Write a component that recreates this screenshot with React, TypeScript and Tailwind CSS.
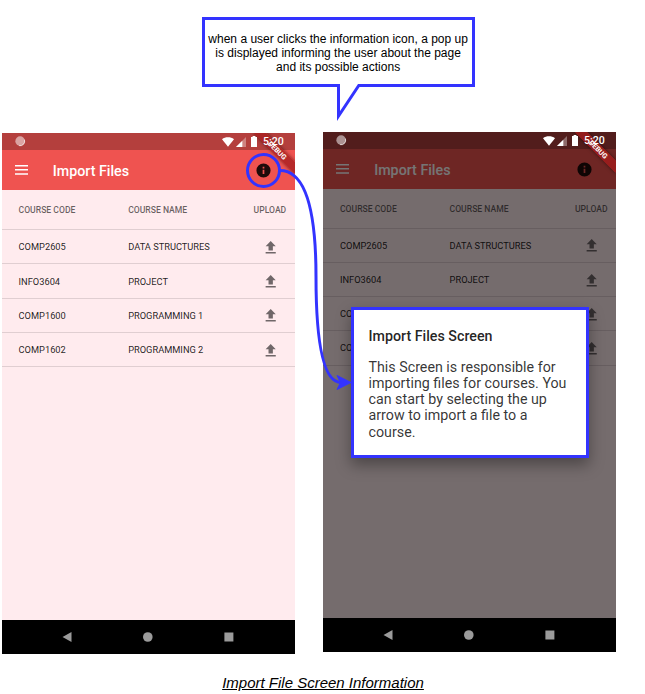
import React from 'react';

const courses = [
  { code: 'COMP2605', name: 'DATA STRUCTURES' },
  { code: 'INFO3604', name: 'PROJECT' },
  { code: 'COMP1600', name: 'PROGRAMMING 1' },
  { code: 'COMP1602', name: 'PROGRAMMING 2' },
];

function UploadIcon() {
  return (
    <svg viewBox="0 0 24 24" className="mt-[0.5px] h-[17.4px] w-[17.4px]" fill="#000" fillOpacity="0.56">
      <path d="M9 16h6v-6h4l-7-7.4L5 10h4zM5 18h14v2H5z" />
    </svg>
  );
}

function StatusBar() {
  return (
    <div className="flex h-[17px] shrink-0 items-center bg-[#b43f3d] pl-[13px] pr-[10.8px]">
      <svg viewBox="0 0 12 12" className="relative z-30 h-[11px] w-[11px]">
        <circle cx="5.6" cy="5.6" r="5.2" fill="#fff" fillOpacity="0.52" />
        <path d="M10.3 4A5 5 0 0 1 4.4 10.5" fill="none" stroke="#fff" strokeOpacity="0.7" strokeWidth="1" />
      </svg>
      <div className="relative z-30 ml-auto flex items-center text-white">
        <svg viewBox="0 0 12 10" className="h-[10px] w-[12px]" fill="#fff">
          <path d="M0 2.3C3.3-.3 8.7-.3 12 2.3L6 9.7z" />
        </svg>
        <svg viewBox="0 0 10 10" className="ml-[2px] h-[10px] w-[10px]" fill="#fff">
          <path d="M10 0v10H0z" fillOpacity="0.35" />
          <path d="M6.3 3.7V10H0z" />
        </svg>
        <svg viewBox="0 0 6 11" className="ml-[5.5px] h-[11px] w-[6px]" fill="#fff">
          <path d="M1.6 0h2.8v1.1H6V11H0V1.1h1.6z" />
        </svg>
        <span className="ml-[5.5px] mt-px text-[10.6px] font-medium leading-[16px]">5:20</span>
      </div>
    </div>
  );
}

function Phone({ dimmed = false }: { dimmed?: boolean }) {
  return (
    <div
      className={
        'relative flex flex-col overflow-hidden bg-[#ffebee] ' +
        (dimmed ? 'h-[520px] w-[292.6px]' : 'mt-px h-[521px] w-[293px]')
      }
    >
      <StatusBar />
      <div
        className={
          'flex h-[40px] shrink-0 items-center bg-[#ef5350] pl-[13.2px] ' +
          (dimmed ? 'pr-[22.8px]' : 'pr-[22.8px]')
        }
      >
        <svg viewBox="0 0 13 10" className="h-[10px] w-[13px]" fill="#fff">
          <path d="M0 .1h13v1.5H0zM0 4.1h13v1.5H0zM0 8.2h13v1.5H0z" />
        </svg>
        <h1 className="ml-[25px] mt-[2px] text-[14.26px] font-medium leading-[20px] text-white">Import Files</h1>
        <svg viewBox="0 0 24 24" className="ml-auto h-[17px] w-[17px]" fill="#000" fillOpacity="0.87">
          <path d="M12 2a10 10 0 1 0 0 20 10 10 0 0 0 0-20zm1.2 15h-2.4v-6h2.4zm0-7.8h-2.4V6.8h2.4z" />
        </svg>
      </div>
      <div className="flex h-[40px] shrink-0 items-center border-b border-black/12 pl-[17px] pt-px text-[8.6px] font-medium text-black/60">
        <span className="w-[109.6px]">COURSE CODE</span>
        <span className="w-[125.4px]">COURSE NAME</span>
        <span>UPLOAD</span>
      </div>
      {courses.map((c) => (
        <div
          key={c.code}
          className={
            'flex shrink-0 items-center border-b border-black/12 pl-[17px] text-[9.27px] text-black/87 ' +
            (dimmed ? 'h-[34.15px] pt-[0.6px]' : 'h-[34.25px] pt-[1.2px]')
          }
        >
          <span className="w-[109.6px]">{c.code}</span>
          <span className={dimmed ? 'w-[133.4px]' : 'w-[134.1px]'}>{c.name}</span>
          <UploadIcon />
        </div>
      ))}
      <div className="mt-auto h-[34px] shrink-0 bg-black">
        <svg viewBox="0 0 293 34" className="relative z-30 h-[34px] w-[293px]" fill="#9b9b9b">
          <path d="M60.5 17l9-5v10z" />
          <circle cx="145.8" cy="17" r="4.8" />
          <path d="M222.4 12.5h9v9h-9z" />
        </svg>
      </div>
      {dimmed && <div className="absolute inset-0 z-10 bg-black/54" />}
      <div
        className={
          'absolute right-[-11.4px] top-[13.3px] z-20 flex h-[8.55px] w-[57px] rotate-45 items-center justify-center text-[7.1px] font-bold leading-none text-white shadow-[0_0_4px_rgba(0,0,0,0.5)] ' +
          (dimmed ? 'bg-[#a31c1c]/80' : 'bg-[#a81f1f]/80')
        }
      >
        DEBUG
      </div>
    </div>
  );
}

export default function App() {
  return (
    <main className="relative flex h-[694px] w-[645px] flex-col overflow-hidden bg-white font-['Roboto',sans-serif]">
      <div className="ml-[202px] mt-[17px] h-[70px] w-[273px] border-[3px] border-[#3333ff] pr-[0.8px] pt-[12px] text-center font-['Liberation_Sans',sans-serif] text-[12px] leading-[14px] text-black">
        when a user clicks the information icon, a pop up
        <br />
        is displayed informing the user about the page
        <br />
        and its possible actions
      </div>
      <div className="mt-[45px] flex items-start gap-[28.4px] pl-[1.6px]">
        <Phone />
        <Phone dimmed />
      </div>
      <p className="mt-[20px] pl-[1px] text-center font-['Liberation_Sans',sans-serif] text-[15px] italic leading-[18px] text-black underline">
        Import File Screen Information
      </p>

      <section className="absolute left-[351px] top-[307px] z-30 h-[151px] w-[238px] border-[3px] border-[#3333ff] bg-white pl-[14.5px] pt-[17px] shadow-[0_7px_14px_rgba(0,0,0,0.35)]">
        <h2 className="text-[14.26px] font-medium leading-[18px] text-black/87">Import Files Screen</h2>
        <p className="mt-[13.6px] w-[206px] text-[14.26px] leading-[16.3px] text-black/80">
          This Screen is responsible for
          <br />
          importing files for courses. You
          <br />
          can start by selecting the up
          <br />
          arrow to import a file to a
          <br />
          course.
        </p>
      </section>

      <svg viewBox="0 0 645 694" className="absolute inset-0 z-40 h-[694px] w-[645px]" fill="none">
        <path d="M338.5 83h20v5h-20z" fill="#fff" />
        <path d="M336 85.5h2.5v30.5L358.8 85.5h2" stroke="#3333ff" strokeWidth="3" strokeMiterlimit="10" />
        <circle cx="263.5" cy="170.5" r="16" stroke="#3333ff" strokeWidth="3" />
        <path d="M280 170.5Q316 170.5 316 276.5T341 382.5" stroke="#3333ff" strokeWidth="3" />
        <path d="M351 382.5l-14 7 3.5-7-3.5-7z" fill="#3333ff" stroke="#3333ff" />
      </svg>
    </main>
  );
}
